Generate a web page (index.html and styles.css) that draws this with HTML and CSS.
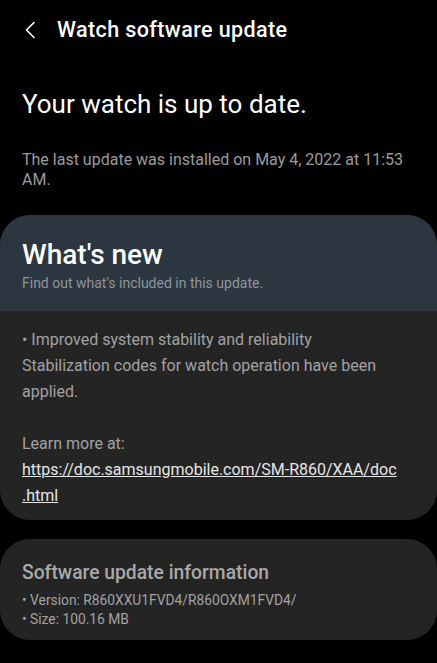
FILE: index.html
```html
<!DOCTYPE html>
<html lang="en">
<head>
  <meta charset="UTF-8">
  <meta name="viewport" content="width=device-width, initial-scale=1.0">
  <title>Watch software update</title>
  <link rel="stylesheet" href="styles.css">
</head>
<body>
  <header class="topbar">
    <svg class="back" width="14" height="18" viewBox="0 0 14 18">
      <path d="M11 1.5 L3.5 9 L11 16.5" fill="none" stroke="#fff" stroke-width="1.6" stroke-linecap="round" stroke-linejoin="round"/>
    </svg>
    <h1 class="title">Watch software update</h1>
  </header>

  <section class="status">
    <h2 class="status-head">Your watch is up to date.</h2>
    <p class="status-text">The last update was installed on May 4, 2022 at 11:53 AM.</p>
  </section>

  <div class="card">
    <div class="card-head">
      <h3 class="news-title">What's new</h3>
      <p class="news-sub">Find out what's included in this update.</p>
    </div>
    <div class="card-body">
      <p>• Improved system stability and reliability<br>
      Stabilization codes for watch operation have been applied.</p>
      <p class="learn">Learn more at:<br>
      <a href="#">https://doc.samsungmobile.com/SM-R860/XAA/doc<br>.html</a></p>
    </div>
  </div>

  <div class="card info">
    <h3 class="info-title">Software update information</h3>
    <p class="info-line">• Version: R860XXU1FVD4/R860OXM1FVD4/</p>
    <p class="info-line">• Size: 100.16 MB</p>
  </div>
</body>
</html>
```

FILE: styles.css
```css
* {
  box-sizing: border-box;
  margin: 0;
  padding: 0;
}

body {
  background-color: #000;
  color: #fff;
  font-family: Roboto, "Noto Sans", sans-serif;
}

.topbar {
  display: flex;
  align-items: center;
  padding: 16px 22px 0 23px;
}

.back {
  margin-right: 20px;
}

.title {
  font-size: 21.5px;
  line-height: 28px;
  font-weight: 500;
  letter-spacing: 0.4px;
}

.status {
  padding: 43px 22px 0;
}

.status-head {
  font-size: 26px;
  line-height: 34px;
  font-weight: 400;
}

.status-text {
  margin-top: 29px;
  font-size: 16px;
  line-height: 20px;
  color: #9b9b9b;
}

.card {
  margin-top: 25px;
  background-color: #242424;
  border-radius: 30px;
  overflow: hidden;
}

.card-head {
  background-color: #2b3641;
  padding: 23px 22px 19px;
}

.news-title {
  font-size: 28px;
  line-height: 34px;
  font-weight: 500;
}

.news-sub {
  margin-top: 2px;
  font-size: 14px;
  line-height: 18px;
  color: #8f959b;
}

.card-body {
  padding: 16px 22px 11px;
  font-size: 16px;
  line-height: 26px;
  color: #a2a2a2;
}

.learn {
  margin-top: 26px;
}

.learn a {
  color: #e6e6e6;
  white-space: nowrap;
}

.info {
  margin-top: 19px;
  padding: 21px 22px 11px;
}

.info-title {
  font-size: 19.3px;
  line-height: 26px;
  font-weight: 500;
  color: #a9a9a9;
  margin-bottom: 5px;
}

.info-line {
  font-size: 13.8px;
  line-height: 19px;
  color: #a2a2a2;
}
```
